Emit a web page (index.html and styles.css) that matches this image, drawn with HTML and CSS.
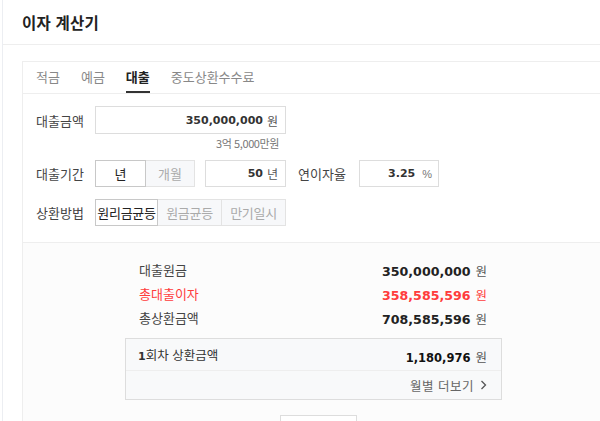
FILE: index.html
```html
<!DOCTYPE html>
<html lang="ko">
<head>
<meta charset="utf-8">
<title>이자 계산기</title>
<link rel="stylesheet" href="styles.css">
</head>
<body>
<div class="page">
  <header class="hd"><h1 class="title">이자 계산기</h1></header>
  <div class="wrap">
    <div class="card">
      <ul class="tabs">
        <li class="tab">적금</li>
        <li class="tab">예금</li>
        <li class="tab on">대출</li>
        <li class="tab">중도상환수수료</li>
      </ul>
      <div class="form">
        <div class="row">
          <span class="lbl">대출금액</span>
          <div class="inp inp-amount"><b class="num">350,000,000</b><span class="unit">원</span></div>
        </div>
        <div class="hint">3억 5,000만원</div>
        <div class="row row-period">
          <span class="lbl">대출기간</span>
          <div class="seg">
            <span class="seg-btn sel seg-year">년</span>
            <span class="seg-btn seg-month">개월</span>
          </div>
          <div class="inp inp-small"><b class="num">50</b><span class="unit">년</span></div>
          <span class="lbl lbl-rate">연이자율</span>
          <div class="inp inp-small inp-rate"><b class="num">3.25</b><span class="unit pct">%</span></div>
        </div>
        <div class="row row-method">
          <span class="lbl">상환방법</span>
          <div class="seg">
            <span class="seg-btn sel m">원리금균등</span>
            <span class="seg-btn m">원금균등</span>
            <span class="seg-btn m">만기일시</span>
          </div>
        </div>
      </div>
      <div class="result">
        <div class="res-block">
          <div class="res-row"><span class="res-lbl">대출원금</span><span class="res-val"><b class="num">350,000,000</b><span class="unit">원</span></span></div>
          <div class="res-row red"><span class="res-lbl">총대출이자</span><span class="res-val"><b class="num">358,585,596</b><span class="unit">원</span></span></div>
          <div class="res-row"><span class="res-lbl">총상환금액</span><span class="res-val"><b class="num">708,585,596</b><span class="unit">원</span></span></div>
          <div class="box">
            <div class="box-top"><span class="box-lbl"><b class="one">1</b>회차 상환금액</span><span class="res-val"><b class="num num-s">1,180,976</b><span class="unit">원</span></span></div>
            <div class="box-bot"><span class="more">월별 더보기</span><svg class="chev" width="7" height="10" viewBox="0 0 7 10"><path d="M1.5 1 L5.5 5 L1.5 9" fill="none" stroke="#555" stroke-width="1.3"/></svg></div>
          </div>
          <div class="btn-wrap"><span class="btn"></span></div>
        </div>
      </div>
    </div>
  </div>
</div>
</body>
</html>
```

FILE: styles.css
```css
* { box-sizing: border-box; }
html, body { margin: 0; padding: 0; background: #fff; overflow: hidden; }
body { width: 600px; height: 421px; font-family: "Noto Sans CJK KR", "Noto Sans", sans-serif; color: #333; }
.page { margin-left: 2px; border-left: 1px solid #eceef2; height: 421px; display: flex; flex-direction: column; overflow: hidden; }
.hd { height: 45px; flex: none; border-bottom: 1px solid #eeeeee; padding-left: 19px; display: flex; align-items: center; }
.title { margin: 0; font-size: 15.5px; font-weight: 700; color: #222; letter-spacing: 0.2px; }
.wrap { flex: 1; padding: 16px 0 0 19px; display: flex; min-height: 0; }
.card { flex: 1; border-left: 1px solid #eeeeee; border-top: 1px solid #eeeeee; display: flex; flex-direction: column; min-height: 0; }
.tabs { list-style: none; margin: 0; padding: 0 0 0 13px; height: 32px; flex: none; border-bottom: 1px solid #eeeeee; display: flex; gap: 21px; }
.tab { font-size: 13px; color: #888; line-height: 30px; height: 31px; border-bottom: 2px solid transparent; }
.tab.on { color: #222; font-weight: 700; border-bottom-color: #333; }
.form { flex: none; padding: 12px 0 16px 13px; border-bottom: 1px solid #eeeeee; }
.row { display: flex; align-items: center; }
.lbl { width: 59px; font-size: 13px; color: #444; }
.inp { display: flex; align-items: center; justify-content: flex-end; border: 1px solid #dddddd; background: #fff; height: 28px; padding-right: 7px; }
.inp-amount { width: 191px; }
.num { font-family: "DejaVu Sans", sans-serif; font-weight: 700; font-size: 11px; color: #333; }
.unit { font-size: 12px; color: #555; margin-left: 4px; }
.hint { width: 243px; text-align: right; font-size: 11px; color: #777; line-height: 14px; margin-top: 2px; letter-spacing: -0.4px; }
.row-period { margin-top: 10px; }
.seg { display: flex; }
.seg-btn { height: 27px; display: flex; align-items: center; justify-content: center; font-size: 13px; color: #aaa; background: #f7f8fa; border: 1px solid #e3e3e3; border-left: none; }
.seg-btn:first-child { border-left: 1px solid #e3e3e3; }
.seg-btn.sel { background: #fff; color: #222; border: 1px solid #c8c8c8; }
.seg-year { width: 51px; color: #111; }
.seg-month { width: 49px; }
.inp-small { width: 81px; height: 27px; margin-left: 10px; }
.lbl-rate { margin-left: 12px; width: 61px; }
.inp-rate { margin-left: 0; width: 80px; padding-right: 6px; }
.pct { font-family: "Liberation Sans", sans-serif; font-size: 11px; color: #777; margin-left: 7px; }
.row-method { margin-top: 12px; }
.seg-btn.m { width: 64px; letter-spacing: -0.3px; }
.seg-btn.m.sel { width: 63px; }
.result { flex: 1; min-height: 0; overflow: hidden; background: #fcfcfc; padding-top: 14px; }
.res-block { width: 377px; margin-left: 102px; }
.res-row { display: flex; justify-content: space-between; align-items: center; height: 24px; padding: 0 15px 0 14px; }
.res-lbl { font-size: 13px; color: #444; }
.res-row .num { font-size: 12.6px; color: #222; }
.res-row .unit { font-size: 12.5px; color: #555; margin-left: 5px; }
.res-row.red .res-lbl, .res-row.red .num, .res-row.red .unit { color: #ff3c3c; }
.box { margin-top: 9px; border: 1px solid #dddddd; background: #f8f9fa; }
.box-top { height: 32px; display: flex; justify-content: space-between; align-items: center; padding: 0 14px 0 12px; border-bottom: 1px solid #eeeeee; }
.box-lbl { font-size: 12.5px; color: #333; }
.one { font-family: "DejaVu Sans", sans-serif; font-size: 11px; color: #333; }
.num-s { font-size: 11.5px; color: #111; }
.box-top .unit { font-size: 12.5px; margin-left: 5px; }
.box-bot { height: 28px; display: flex; justify-content: flex-end; align-items: center; padding-right: 14px; }
.more { font-size: 12.5px; color: #666; letter-spacing: 0.5px; }
.chev { margin-left: 6px; }
.btn-wrap { display: flex; margin-top: 15px; padding-left: 155px; }
.btn { width: 77px; height: 30px; border: 1px solid #dddddd; background: #fff; }
```
